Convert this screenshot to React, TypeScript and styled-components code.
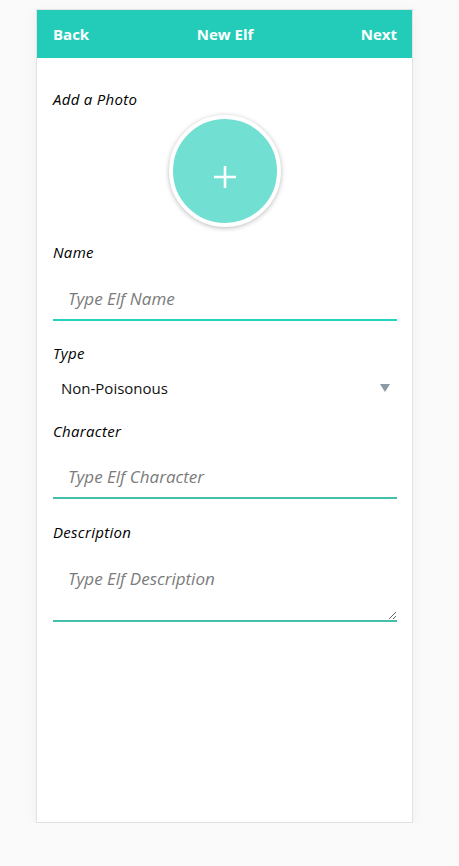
import React from 'react';
import styled, { createGlobalStyle } from 'styled-components';

const GlobalStyle = createGlobalStyle`
  html, body {
    margin: 0;
    padding: 0;
    background: #fafafa;
  }
  * {
    box-sizing: border-box;
  }
`;

const Page = styled.div`
  padding: 9px 0 0 36px;
  font-family: "Segoe UI", "Open Sans", "Noto Sans", sans-serif;
`;

const Card = styled.div`
  width: 377px;
  height: 814px;
  background: #fff;
  border: 1px solid #e2e2e2;
  box-shadow: 0 3px 12px rgba(0, 0, 0, 0.05);
  display: flex;
  flex-direction: column;
`;

const Header = styled.header`
  height: 48px;
  background: #23ccb9;
  display: grid;
  grid-template-columns: 1fr auto 1fr;
  align-items: center;
  padding: 0 15px 0 16px;
  color: #fff;
  font-weight: 700;
  font-size: 15px;
`;

const HeaderLink = styled.span<{ $align?: 'left' | 'right' }>`
  text-align: ${(p) => p.$align || 'left'};
  cursor: pointer;
`;

const Form = styled.form`
  padding: 31px 15px 0 16px;
  display: flex;
  flex-direction: column;
`;

const Label = styled.label<{ $gap?: number }>`
  display: block;
  margin-top: ${(p) => p.$gap ?? 0}px;
  font-size: 15px;
  line-height: 20px;
  font-style: italic;
  font-weight: 400;
  letter-spacing: 0.3px;
  color: #000;
`;

const PhotoWrap = styled.div`
  display: flex;
  justify-content: center;
  margin-top: 6px;
`;

const PhotoButton = styled.button`
  width: 112px;
  height: 112px;
  border-radius: 50%;
  border: 4px solid #fff;
  background: #71dfd2;
  box-shadow: 0 1px 5px rgba(0, 0, 0, 0.28);
  display: flex;
  align-items: center;
  justify-content: center;
  padding: 12px 0 0;
  cursor: pointer;
`;

const TextInput = styled.input<{ $focused?: boolean; $gap?: number }>`
  display: block;
  width: 100%;
  height: 44px;
  margin-top: ${(p) => p.$gap ?? 14}px;
  border: none;
  border-bottom: 2px solid ${(p) => (p.$focused ? '#22d3bf' : '#43bfaa')};
  padding: 0 15px;
  font-family: inherit;
  font-size: 17px;
  font-style: italic;
  outline: none;
  background: transparent;
  &::placeholder {
    color: #7b7b7b;
  }
`;

const SelectWrap = styled.div`
  position: relative;
  margin-top: 7px;
`;

const Select = styled.select`
  display: block;
  width: 100%;
  height: 36px;
  appearance: none;
  border: none;
  background: transparent;
  padding: 0 8px;
  font-family: inherit;
  font-size: 15px;
  color: #111;
  outline: none;
`;

const Arrow = styled.span`
  position: absolute;
  right: 7px;
  top: 14px;
  width: 0;
  height: 0;
  border-left: 5px solid transparent;
  border-right: 5px solid transparent;
  border-top: 8px solid #8c9aa3;
  pointer-events: none;
`;

const TextArea = styled.textarea`
  display: block;
  width: 100%;
  height: 66px;
  margin-top: 14px;
  border: none;
  border-bottom: 2px solid #43bfaa;
  padding: 12px 15px 0;
  font-family: inherit;
  font-size: 17px;
  line-height: 22px;
  font-style: italic;
  outline: none;
  resize: vertical;
  &::placeholder {
    color: #7b7b7b;
  }
`;

const PlusIcon = () => (
  <svg width="24" height="24" viewBox="0 0 24 24">
    <path d="M12 1v22M1 12h22" stroke="#fff" strokeWidth="2.6" />
  </svg>
);

export default function App() {
  return (
    <>
      <GlobalStyle />
      <Page>
        <Card>
          <Header>
            <HeaderLink>Back</HeaderLink>
            <span>New Elf</span>
            <HeaderLink $align="right">Next</HeaderLink>
          </Header>
          <Form onSubmit={(e) => e.preventDefault()}>
            <Label>Add a Photo</Label>
            <PhotoWrap>
              <PhotoButton type="button" aria-label="Add a photo">
                <PlusIcon />
              </PhotoButton>
            </PhotoWrap>

            <Label $gap={15}>Name</Label>
            <TextInput $focused $gap={15} placeholder="Type Elf Name" />

            <Label $gap={22}>Type</Label>
            <SelectWrap>
              <Select defaultValue="non">
                <option value="non">Non-Poisonous</option>
                <option value="poison">Poisonous</option>
              </Select>
              <Arrow />
            </SelectWrap>

            <Label $gap={15}>Character</Label>
            <TextInput placeholder="Type Elf Character" />

            <Label $gap={23}>Description</Label>
            <TextArea placeholder="Type Elf Description" />
          </Form>
        </Card>
      </Page>
    </>
  );
}
